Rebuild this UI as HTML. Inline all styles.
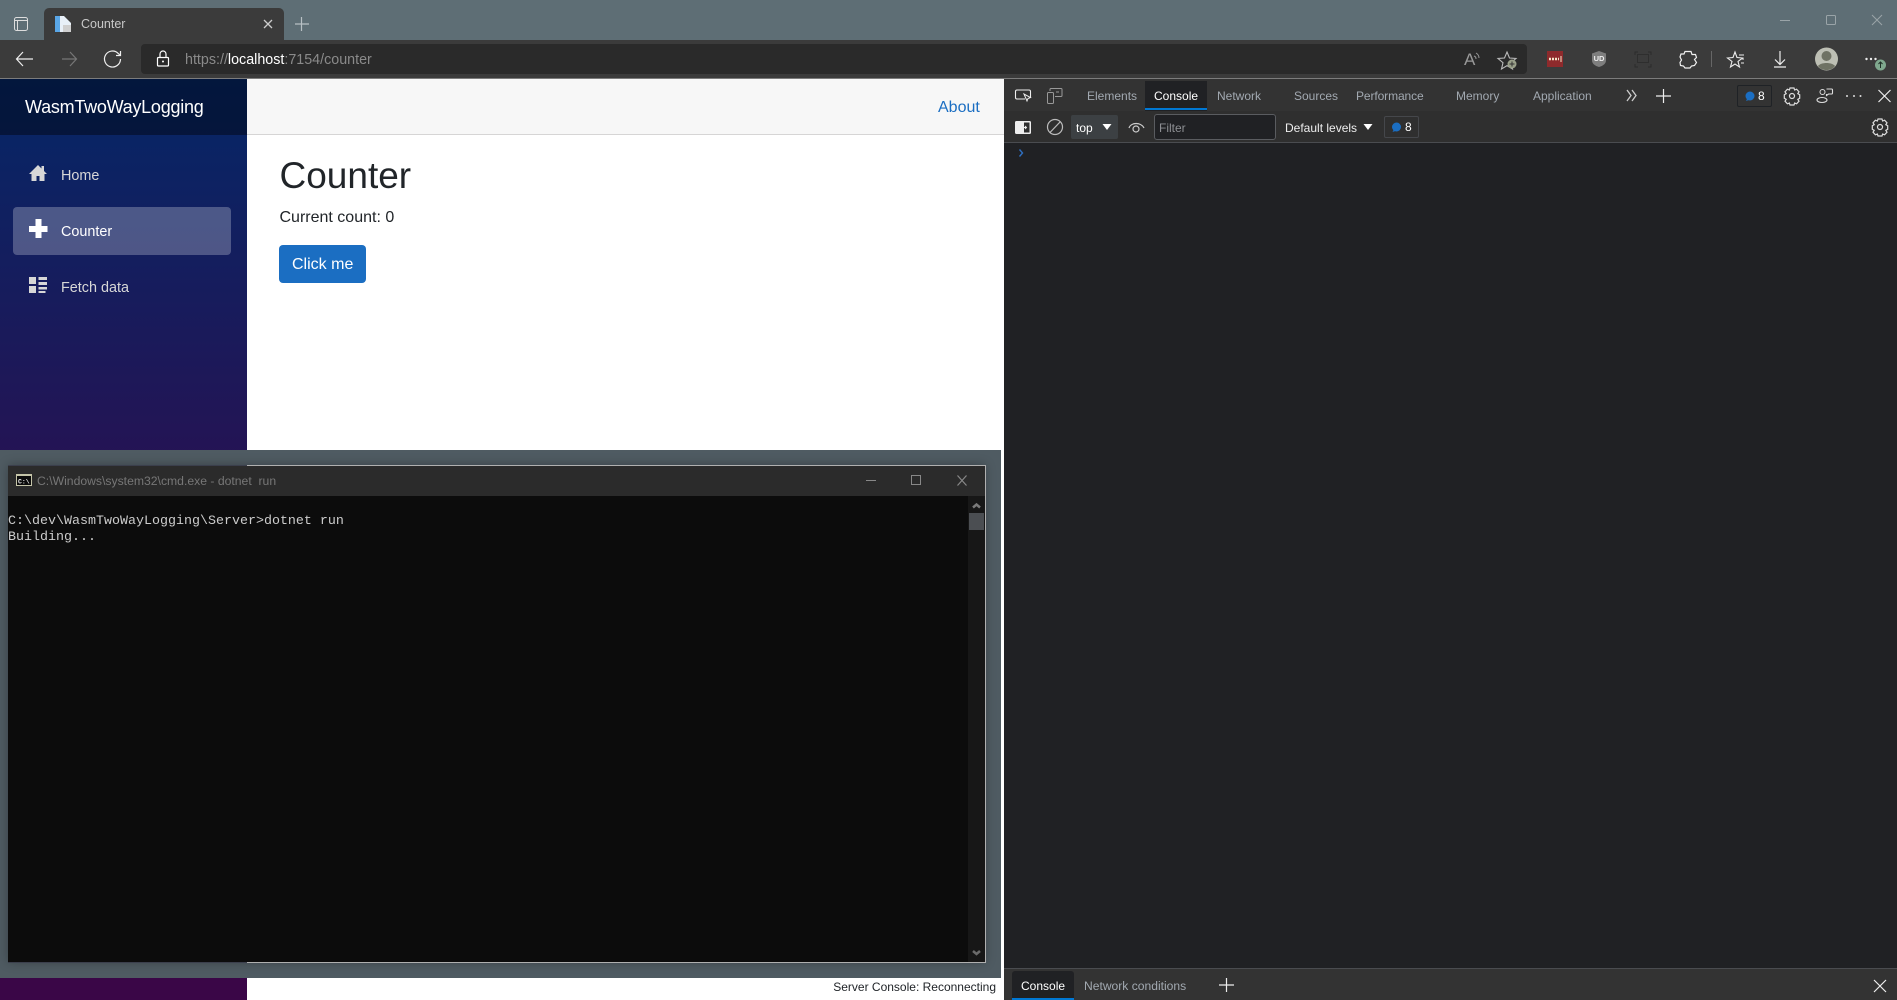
<!DOCTYPE html>
<html><head><meta charset="utf-8"><title>Counter</title>
<style>
html,body{margin:0;padding:0;width:1897px;height:1000px;overflow:hidden;background:#fff}
body{position:relative;font-family:"Liberation Sans",Arial,sans-serif}
.a{position:absolute}
.t{position:absolute;white-space:pre;line-height:1}
svg{position:absolute;left:0;top:0;overflow:visible}
</style></head><body>
<!-- browser chrome -->
<div class="a" style="left:0;top:0;width:1897px;height:40px;background:#5e6e75"></div>
<div class="a" style="left:0;top:40px;width:1897px;height:38px;background:#3b3b3b"></div>
<div class="a" style="left:0;top:78px;width:1897px;height:1px;background:#7c7c7c"></div>
<div class="a" style="left:44px;top:8px;width:240px;height:32px;background:#3b3b3b;border-radius:5px 5px 0 0"></div>
<div class="t" style="left:81px;top:18px;font-size:12.5px;color:#c8c8c8">Counter</div>
<div class="a" style="left:141px;top:44px;width:1386px;height:30px;background:#2a2a2a;border-radius:4px"></div>
<div class="t" style="left:185px;top:53px;font-size:14.3px;color:#8a8a8a">https://<span style="color:#fff">localhost</span>:7154/counter</div>

<!-- sidebar -->
<div class="a" style="left:0;top:79px;width:247px;height:921px;background:linear-gradient(180deg,#052767 0%,#3a0647 70%)"></div>
<div class="a" style="left:0;top:79px;width:247px;height:56px;background:rgba(0,0,0,.4)"></div>
<div class="t" style="left:25px;top:98px;font-size:18px;color:#fff;letter-spacing:-.25px">WasmTwoWayLogging</div>
<div class="a" style="left:13px;top:207px;width:218px;height:48px;background:rgba(255,255,255,.25);border-radius:4px"></div>
<div class="t" style="left:61px;top:169px;font-size:14.4px;color:#d7d7d7">Home</div>
<div class="t" style="left:61px;top:225px;font-size:14.4px;color:#fff">Counter</div>
<div class="t" style="left:61px;top:281px;font-size:14.4px;color:#d7d7d7">Fetch data</div>

<!-- main page -->
<div class="a" style="left:247px;top:79px;width:757px;height:55px;background:#f7f7f7;border-bottom:1px solid #d6d5d5"></div>
<div class="t" style="left:938px;top:100px;font-size:16px;color:#1b6ec2">About</div>
<div class="t" style="left:279.500px;top:157px;font-size:37px;color:#212529">Counter</div>
<div class="t" style="left:279.500px;top:210px;font-size:16px;color:#212529">Current count: 0</div>
<div class="a" style="left:279px;top:245px;width:87px;height:38px;background:#1b6ec2;border-radius:4px"></div>
<div class="t" style="left:292px;top:257px;font-size:16px;color:#fff">Click me</div>

<!-- console overlay -->
<div class="a" style="left:0;top:450px;width:1001px;height:528px;background:#4f5b62"></div>
<div class="a" style="left:8px;top:465px;width:977px;height:497px;box-shadow:0 0 10px rgba(0,0,0,.28);background:#0c0c0c"></div>
<div class="a" style="left:8px;top:466px;width:977px;height:30px;background:#2b2b2b"></div>
<div class="a" style="left:8px;top:465px;width:239px;height:1px;background:#3b3f4c"></div>
<div class="a" style="left:247px;top:465px;width:739px;height:1px;background:#b0b0b0"></div>
<div class="a" style="left:985px;top:465px;width:1px;height:498px;background:#b0b0b0"></div>
<div class="a" style="left:247px;top:962px;width:739px;height:1px;background:#b0b0b0"></div>
<div class="a" style="left:8px;top:962px;width:239px;height:1px;background:#3b3f4c"></div>
<div class="t" style="left:37px;top:475px;font-size:12.2px;color:#777">C:\Windows\system32\cmd.exe - dotnet  run</div>
<div class="a" style="left:968px;top:496px;width:17px;height:466px;background:#171717"></div>
<div class="a" style="left:969px;top:513px;width:15px;height:17px;background:#4b4e52"></div>
<div class="t" style="left:8px;top:514px;font:13.33px/16px 'Liberation Mono',monospace;color:#ccc">C:\dev\WasmTwoWayLogging\Server&gt;dotnet run
Building...</div>
<div class="t" style="right:901px;top:981px;font-size:12px;color:#212529">Server Console: Reconnecting</div>

<!-- devtools -->
<div class="a" style="left:1004px;top:79px;width:893px;height:32px;background:#333"></div>
<div class="a" style="left:1004px;top:111px;width:893px;height:31px;background:#2f2f2f"></div>
<div class="a" style="left:1004px;top:142px;width:893px;height:1px;background:#4a4c50"></div>
<div class="a" style="left:1004px;top:143px;width:893px;height:825px;background:#202124"></div>
<div class="a" style="left:1145px;top:81px;width:62px;height:30px;background:#202124"></div>
<div class="a" style="left:1145px;top:108px;width:62px;height:2px;background:#0078d4"></div>
<div class="t" style="left:1087px;top:90px;font-size:12px;color:#a2a9b1">Elements</div>
<div class="t" style="left:1154px;top:90px;font-size:12px;color:#fff">Console</div>
<div class="t" style="left:1217px;top:90px;font-size:12px;color:#a2a9b1">Network</div>
<div class="t" style="left:1294px;top:90px;font-size:12px;color:#a2a9b1">Sources</div>
<div class="t" style="left:1356px;top:90px;font-size:12px;letter-spacing:-.1px;color:#a2a9b1">Performance</div>
<div class="t" style="left:1456px;top:90px;font-size:12px;color:#a2a9b1">Memory</div>
<div class="t" style="left:1533px;top:90px;font-size:12px;color:#a2a9b1">Application</div>
<div class="a" style="left:1737px;top:85px;width:33px;height:20px;border:1px solid #1f2226;border-radius:2px"></div>
<div class="t" style="left:1758px;top:90px;font-size:12px;color:#fff">8</div>
<div class="a" style="left:1071px;top:115px;width:47px;height:24px;background:#3c4043;border-radius:2px"></div>
<div class="t" style="left:1076px;top:122px;font-size:12px;color:#fff">top</div>
<div class="a" style="left:1154px;top:114px;width:120px;height:24px;background:#202124;border:1px solid #5a5c60;border-radius:3px"></div>
<div class="t" style="left:1159px;top:122px;font-size:12px;color:#8d8f93">Filter</div>
<div class="t" style="left:1285px;top:122px;font-size:12px;color:#eee">Default levels</div>
<div class="a" style="left:1384px;top:116px;width:33px;height:20px;border:1px solid #45474b;border-radius:2px"></div>
<div class="t" style="left:1405px;top:121px;font-size:12px;color:#fff">8</div>

<!-- drawer -->
<div class="a" style="left:1004px;top:968px;width:893px;height:1px;background:#4a4c50"></div>
<div class="a" style="left:1004px;top:969px;width:893px;height:31px;background:#333"></div>
<div class="a" style="left:1012px;top:971px;width:62px;height:29px;background:#202124;border-radius:3px 3px 0 0"></div>
<div class="a" style="left:1012px;top:998px;width:62px;height:2px;background:#0078d4"></div>
<div class="t" style="left:1021px;top:980px;font-size:12px;color:#fff">Console</div>
<div class="t" style="left:1084px;top:980px;font-size:12.1px;color:#a2a9b1">Network conditions</div>

<svg width="1897" height="1000" viewBox="0 0 1897 1000" fill="none">
<!-- tab strip -->
<rect x="14.5" y="17.500" width="13" height="13" rx="2" stroke="#ddd"/><path d="M15 20.500h12M17.500 20.500v10" stroke="#ddd"/>
<path d="M55 16h9l7 7v9H55z" fill="#e8f0f8"/><path d="M55 16h5v16h-5z" fill="#5aa6e6"/><path d="M63 25h8v7h-8z" fill="#cfcfcf"/>
<path d="M264 20l8 8M272 20l-8 8" stroke="#ccc" stroke-width="1.300"/>
<path d="M301.500 17v14M295 24h14" stroke="#b8c0c4" stroke-width="1.200"/>
<!-- nav -->
<path d="M33 59H17M23 52l-6.500 7 6.500 7" stroke="#eee" stroke-width="1.200"/>
<path d="M76 59H62M70 52l6.500 7-6.500 7" stroke="#777" stroke-width="1.200"/>
<path d="M120.500 59a8 8 0 1 1-2.300-5.600l2.300 2" stroke="#eee" stroke-width="1.200"/><path d="M120.500 51v4.500H116" stroke="#eee" stroke-width="1.200"/>
<rect x="157.500" y="57.500" width="11" height="8.500" rx="1" stroke="#fff" stroke-width="1.200"/><path d="M160 57v-3a3 3 0 0 1 6 0v3" stroke="#fff" stroke-width="1.200"/><circle cx="163" cy="61.500" r="1" fill="#fff"/>
<!-- right toolbar -->
<text x="1464" y="65" font-size="17" fill="#999" font-family="Liberation Sans">A</text><path d="M1476 53a6 6 0 0 1 3 5M1474 56a3 3 0 0 1 2 3" stroke="#999"/>
<path d="M1507 52l2.500 6 6.500.5-5 4.200 1.500 6.300-5.500-3.300-5.500 3.300 1.500-6.300-5-4.200 6.500-.5z" stroke="#bbb" stroke-width="1.100"/><circle cx="1512" cy="64" r="4.500" fill="#9aa08a"/><path d="M1512 61.500v5M1509.500 64h5" stroke="#333"/>
<rect x="1547" y="51" width="16" height="16" fill="#8e2a2c"/><path d="M1549 59h10" stroke="#f5e6c8" stroke-width="2.500" stroke-dasharray="2 1"/><path d="M1561 56v6" stroke="#f5e6c8"/>
<path d="M1592 53.500l7-2.500 7 2.500v7c0 3-3 5.500-7 6.500-4-1-7-3.500-7-6.500z" fill="#7e7e7e"/><text x="1599" y="61" font-size="7.500" font-weight="bold" fill="#eee" text-anchor="middle" font-family="Liberation Sans">UD</text>
<path d="M1635 55v-3h3M1648 52h3v3M1651 64v3h-3M1638 67h-3v-3" stroke="#2b2b2b"/><rect x="1637.500" y="54.500" width="11" height="8" stroke="#2e2e2e"/>
<path d="M1684 52h6l1 3h3.500l1 3-2 2 2 3-2 3-3 .5-1.500 2h-5l-1.500-2-3-.5-.5-3 1.500-2.500-1.500-3 1-3h3z" stroke="#f0f0f0" stroke-width="1.200" transform="translate(1 -0.500)"/>
<path d="M1711.500 51v16" stroke="#666"/>
<path d="M1735 52l2 5.500 5.500.5-4.500 3.500 1.500 5.500-4.500-3-4.500 3 1.500-5.500-4.500-3.500 5.500-.5z" stroke="#eee" stroke-width="1.100"/><path d="M1739 55h5M1741 59h3M1741 63h3" stroke="#eee" stroke-width="1.100"/>
<path d="M1780 51v13M1775 59.500l5 5 5-5M1774 67h12" stroke="#eee" stroke-width="1.200"/>
<circle cx="1826.500" cy="59" r="11.500" fill="#bdbfb4"/><circle cx="1826.500" cy="56" r="5" fill="#6f7264"/><path d="M1818 66c3-4 14-4 17 0-2 3-5 4-8.500 4s-6.500-1-8.500-4z" fill="#6f7264"/>
<circle cx="1866.500" cy="59" r="1.200" fill="#eee"/><circle cx="1871" cy="59" r="1.200" fill="#eee"/><circle cx="1875.500" cy="59" r="1.200" fill="#eee"/>
<circle cx="1880.500" cy="65" r="5.500" fill="#7fa88e"/><path d="M1880.500 68v-6M1878.500 64l2-2 2 2" stroke="#1f2f26"/>
<!-- window -->
<path d="M1780 20.500h10" stroke="#9aa4a8"/><rect x="1826.500" y="15.500" width="9" height="9" rx="1" stroke="#9aa4a8"/><path d="M1872 15l10 10M1882 15l-10 10" stroke="#9aa4a8"/>
<!-- sidebar icons -->
<path d="M38 165L29 174h2.500v7h5v-5h3v5h5v-7H47l-3-3v-5h-2.500v2.500z" fill="#d7d7d7"/>
<path d="M35.500 219h6v7h6v6h-6v6h-6v-6H29v-6h6.500z" fill="#fff"/>
<path d="M29 277h7v7h-7zM29 286h7v7h-7zM38.500 277h8.500v3h-8.500zM38.500 282h8.500v3h-8.500zM38.500 287h8.500v2.500h-8.500zM38.500 291h7v2h-7z" fill="#d7d7d7"/>
<!-- console window -->
<rect x="16.500" y="474.500" width="15" height="11" fill="#0c0c0c" stroke="#c4c4a8"/><path d="M16 474h16v2H16z" fill="#c4c4a8"/><text x="18" y="483.500" font-size="6.500" font-weight="bold" fill="#eee" font-family="Liberation Mono">C:\</text>
<path d="M866 480.500h10" stroke="#888"/><rect x="911.500" y="475.500" width="9" height="9" stroke="#888"/><path d="M957.500 475.500l9 10M966.500 475.500l-9 10" stroke="#888" stroke-width="1.200"/>
<path d="M973 507.500l3.500-3 3.500 3" stroke="#7a7a7a" stroke-width="2.500"/>
<path d="M973 951l3.500 3 3.500-3" stroke="#6b6b6b" stroke-width="2.500"/>
<!-- devtools row 1 -->
<path d="M1025 99h-8a1.500 1.500 0 0 1-1.500-1.500v-6a1.500 1.500 0 0 1 1.500-1.500h12a1.500 1.500 0 0 1 1.500 1.500v6" stroke="#eee" stroke-width="1.100"/><path d="M1024 94l3 7 1-2.500 2.500-1z" fill="#333" stroke="#eee"/>
<rect x="1047.500" y="92.500" width="6" height="11" rx="1" stroke="#999"/><path d="M1050 91v-1.500a1 1 0 0 1 1-1h10a1 1 0 0 1 1 1v6a1 1 0 0 1-1 1h-6M1056 92h3" stroke="#999"/>
<path d="M1627 90l4 5.500-4 5.500M1632 90l4 5.500-4 5.500" stroke="#ccc" stroke-width="1.300"/>
<path d="M1663.500 89v14M1656 96h15" stroke="#eee" stroke-width="1.200"/>
<circle cx="1750" cy="96" r="4.500" fill="#1b6ec2"/><path d="M1747 99l-1 2 3-1z" fill="#1b6ec2"/>
<g stroke="#ddd" stroke-width="1.200"><circle cx="1792" cy="96" r="2.500"/><path d="M1790 88h4l.600 2 2-.800 2.400 2.600-1.200 1.900 1.900 1v3.600l-1.900 1 1.200 1.900-2.400 2.600-2-.800-.6 2h-4l-.6-2-2 .800-2.400-2.600 1.200-1.900-1.900-1v-3.600l1.900-1-1.200-1.900 2.400-2.600 2 .800z"/></g>
<g transform="translate(2.500 0)"><path d="M1824 89h5a1 1 0 0 1 1 1v3a1 1 0 0 1-1 1h-3l-2 1.500V94" stroke="#ddd" stroke-width="1.100"/><circle cx="1820" cy="92" r="2.500" stroke="#ddd"/><ellipse cx="1819.500" cy="100" rx="5" ry="2.500" stroke="#ddd" stroke-width="1.100"/></g>
<circle cx="1847" cy="96" r="1" fill="#ddd"/><circle cx="1854" cy="96" r="1" fill="#ddd"/><circle cx="1860.500" cy="96" r="1" fill="#ddd"/>
<path d="M1878.500 90l12 12M1890.500 90l-12 12" stroke="#eee" stroke-width="1.200"/>
<!-- devtools row 2 -->
<rect x="1015" y="121" width="16" height="13" rx="1.500" fill="#eee"/><rect x="1024" y="122.500" width="5.500" height="10" fill="#2f2f2f"/><path d="M1023 127.500h3.500M1025 126l1.500 1.500-1.500 1.500" stroke="#eee" stroke-width="1"/>
<circle cx="1055" cy="127" r="7.500" stroke="#bbb" stroke-width="1.200"/><path d="M1050 132.500l10.500-11" stroke="#bbb" stroke-width="1.200"/>
<path d="M1102.500 124h9l-4.500 6z" fill="#fff"/>
<path d="M1129 128c2-6 12-6 15 0" stroke="#ccc" stroke-width="1.200"/><circle cx="1136" cy="129" r="3" stroke="#ccc" stroke-width="1.200"/>
<path d="M1363.500 124h9l-4.500 6z" fill="#fff"/>
<circle cx="1396.500" cy="127" r="4.500" fill="#1b6ec2"/><path d="M1393.500 130l-1 2 3-1z" fill="#1b6ec2"/>
<g stroke="#ddd" stroke-width="1.200" transform="translate(88 31)"><circle cx="1792" cy="96" r="2.500"/><path d="M1790 88h4l.600 2 2-.800 2.400 2.600-1.200 1.900 1.900 1v3.600l-1.900 1 1.200 1.900-2.400 2.600-2-.800-.6 2h-4l-.6-2-2 .800-2.400-2.600 1.200-1.900-1.900-1v-3.600l1.900-1-1.200-1.900 2.400-2.600 2 .800z"/></g>
<path d="M1019.500 149.500l3 3.500-3 3.500" stroke="#2f6fc0" stroke-width="1.400"/>
<!-- drawer -->
<path d="M1226.500 978v14M1219 985h15" stroke="#eee" stroke-width="1.200"/>
<path d="M1874 980l12 12M1886 980l-12 12" stroke="#eee" stroke-width="1.200"/>
</svg>
</body></html>
